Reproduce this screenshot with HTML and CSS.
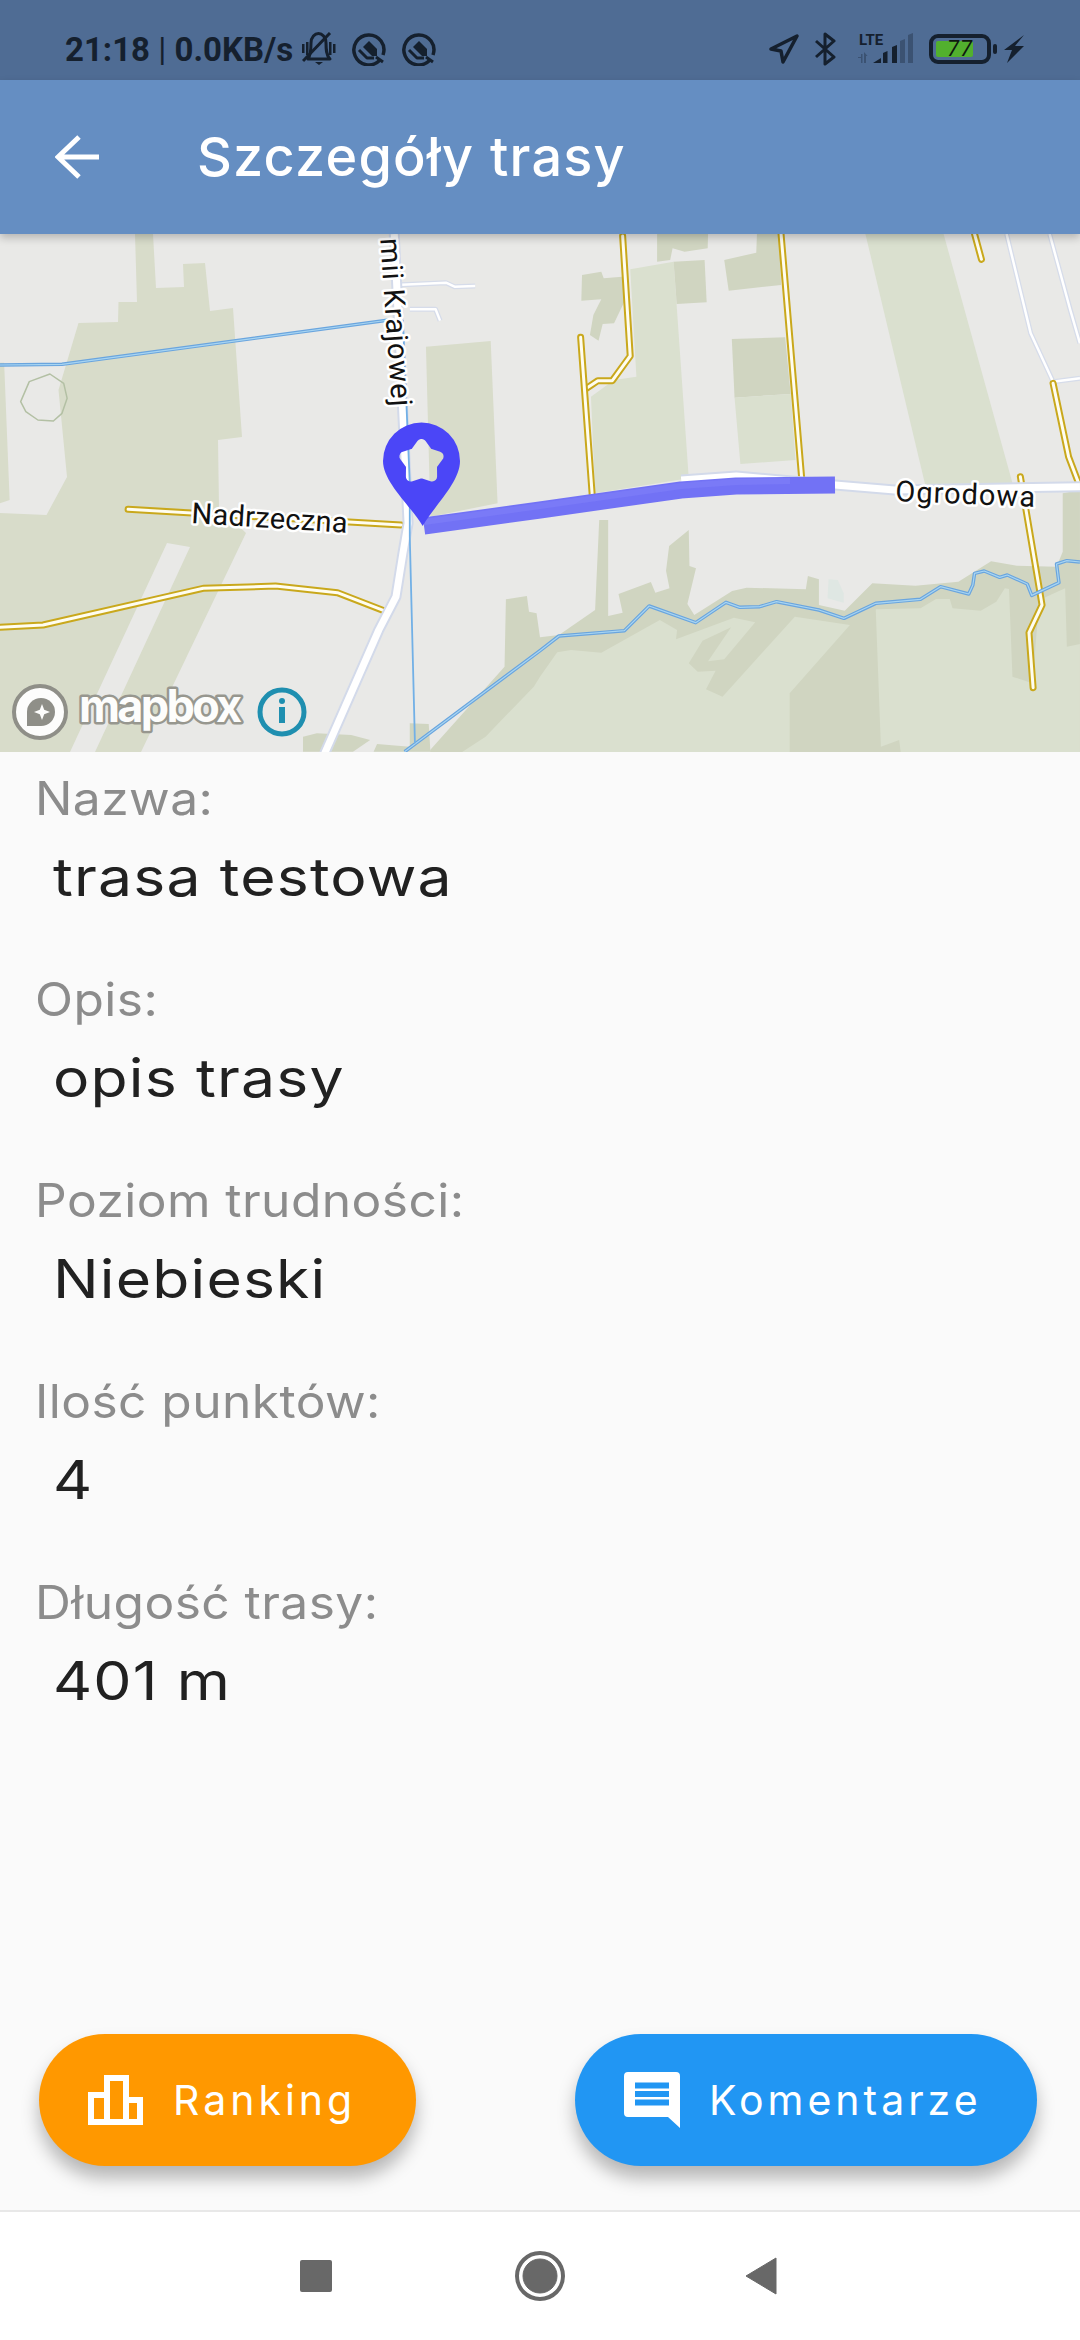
FILE: index.html
```html
<!DOCTYPE html>
<html lang="pl">
<head>
<meta charset="utf-8">
<title>Szczegóły trasy</title>
<link rel="stylesheet" href="styles.css">
</head>
<body>
<div class="screen">
  <header class="statusbar">
    <div class="status-left">
      <span class="status-text">21:18 <span class="thin">|</span> 0.0KB/s</span>
      <svg class="ic-bell" viewBox="0 0 34 34"><path class="si-line" d="M6 27c3-4 3-10 3-16 0-6 4-9.500 7.500-9.500S24 5 24 11c0 6 0 12 4 16z"/><path class="si-fill" d="M13 30h8l-4 3zM0 12h2.500v9H0zM4 10h2.500v13H4zM27 10h2.500v13H27zM31 12h2.500v9H31z"/><path class="si-slash" d="M1 29L28 1"/></svg>
      <svg class="ic-ring" viewBox="0 0 34 34"><path class="si-ring" d="M27.500 28.500A15 15 0 1 1 31 23"/><path class="si-fill" d="M11 15l6-6 8 8v7h-5z"/><path class="si-line" d="M7 18l8 8h7M24 25l7 5"/></svg>
      <svg class="ic-ring" viewBox="0 0 34 34"><path class="si-ring" d="M27.500 28.500A15 15 0 1 1 31 23"/><path class="si-fill" d="M11 15l6-6 8 8v7h-5z"/><path class="si-line" d="M7 18l8 8h7M24 25l7 5"/></svg>
    </div>
    <div class="status-right">
      <svg class="ic-nav" viewBox="0 0 30 30"><path class="si-nav" d="M2 15L28 2 14 28l-2-11z"/></svg>
      <svg class="ic-bt" viewBox="0 0 22 34"><path class="si-line" d="M2 9l18 16-9 7V2l9 7L2 25"/></svg>
      <svg class="ic-signal" viewBox="0 0 56 32">
        <text class="lte-text" x="1" y="12">LTE</text>
        <path class="si-faint" d="M0 24h3v-3h1.500v9H3v-5H0zM6 30V19l3.500 4H8v7z"/>
        <path class="si-fill" d="M15 30l8-5v5zM25 30V20l4.500-2v12zM34 30V14l5-2v18z"/>
        <path class="si-faint" d="M42 30V8l5-2v24zM50 30V2l5-2v30z"/>
      </svg>
      <div class="battery">
        <div class="battery-body"><div class="battery-fill"></div><span class="battery-num">77</span></div>
        <div class="battery-nub"></div>
      </div>
      <svg class="ic-bolt" viewBox="0 0 20 28"><path class="si-fill" d="M20 0L11 11h9L3 28l5-13H0z"/></svg>
    </div>
  </header>

  <div class="appbar">
    <svg class="ic-back" viewBox="0 0 44 44"><path class="back-line" d="M44 22H4M24 2L3 22l21 20"/></svg>
    <h1 class="title">Szczegóły trasy</h1>
  </div>

  <svg class="map" viewBox="0 234 1080 518">
    <rect class="land" x="0" y="234" width="1080" height="518"/>
    <polygon class="green" points="135,234 153,234 156,288 184,287 183,264 205,263 210,311 233,308 242,437 218,440 219,507 246,533 141,752 95,752 190,547 167,543 70,752 0,752 0,513 46.5,515 67,477 58.5,390 78.5,323 118,322 118.5,302 137,302"/>
    <g transform="translate(0 230) scale(.34435 .33333)">
      <polygon class="green" points="0,398 12,398 28,810 0,820"/>
      <polygon class="green" points="1237,350 1425,333 1445,820 1250,860"/>
      <polygon class="outline" points="145,432 185,460 195,505 180,550 155,573 110,570 75,545 60,515 85,455"/>
    </g>
    <g transform="translate(540 230) scale(.34435 .33333)">
      <polygon class="green-l" points="262,118 388,95 432,745 160,790 148,500 215,450 280,440"/>
      <polygon class="green-d" points="340,12 488,12 487,55 420,65 385,55 378,90 340,95"/>
      <polygon class="green-d" points="388,95 478,90 484,217 397,222"/>
      <polygon class="green-d" points="122,135 178,125 185,145 238,140 245,215 215,280 182,282 170,332 145,315 155,255 178,208 120,212"/>
      <polygon class="green-d" points="630,12 695,12 700,165 548,182 535,90 628,68"/>
      <polygon class="green-d" points="557,327 712,322 728,492 565,503"/>
      <polygon class="green-l" points="565,503 728,492 742,690 582,702"/>
      <polygon class="green-l" points="945,12 1172,12 1375,770 1120,770"/>
    </g>
    <g transform="translate(540 520) scale(.34435 .33333)">
      <polygon class="green-d" points="-99,238 -38,228 -32,275 -10,280 0,352 55,345 160,270 172,0 198,0 198,288 240,278 228,222 322,186 335,218 376,205 366,152 375,78 432,30 434,138 453,145 428,252 448,285 558,213 600,203 772,208 778,168 810,178 810,255 885,272 965,190 1090,197 1215,185 1310,124 1385,137 1500,140 1518,95 1518,-80 1568,-90 1568,700 -319,700 -319,690 -103,440"/>
      <polygon class="green-l" points="0,470 50,397 90,390 178,398 348,300 398,330 395,358 563,293 625,307 535,418 488,424 555,322 472,362 432,430 458,455 510,452 482,508 530,530 740,290 900,315 725,520 725,700 -232,700 -158,650 -18,500"/>
      <polygon class="green-l" points="975,268 1105,265 1150,237 1190,237 1198,265 1280,272 1325,245 1350,205 1362,207 1372,470 1430,490 1450,240 1525,205 1530,380 1568,372 1568,700 1048,700 1043,660 990,680"/>
      <polygon class="pond" points="838,178 865,180 882,220 882,248 835,235"/>
    </g>
    <g transform="translate(0 520) scale(.34435 .33333)">
      <polygon class="green-d" points="880,650 920,640 1020,645 1075,660 1025,695 880,695"/>
      <polygon class="green-d" points="1085,695 1095,672 1190,680 1190,610 1245,612 1250,695"/>
    </g>

    <g transform="translate(540 230) scale(.34435 .33333)">
      <polyline class="minor-c" points="1355,12 1425,310 1490,455 1568,445"/>
      <polyline class="minor" points="1355,12 1425,310 1490,455 1568,445"/>
      <polyline class="minor-c" points="1480,12 1540,240 1568,340"/>
      <polyline class="minor" points="1480,12 1540,240 1568,340"/>
      <polyline class="yel-c" points="240,18 262,378 210,452 168,452 135,475"/>
      <polyline class="yel" points="240,18 262,378 210,452 168,452 135,475"/>
      <polyline class="yel-c" points="118,322 152,800"/><polyline class="yel" points="118,322 152,800"/>
      <polyline class="yel-c" points="700,12 760,745"/><polyline class="yel" points="700,12 760,745"/>
      <polyline class="yel-c" points="1262,12 1282,88"/><polyline class="yel" points="1262,12 1282,88"/>
      <polyline class="yel-c" points="1490,460 1535,680 1568,770"/><polyline class="yel" points="1490,460 1535,680 1568,770"/>
    </g>
    <g transform="translate(540 520) scale(.34435 .33333)">
      <polyline class="yel-c" points="1395,-130 1458,255 1420,338 1432,503"/><polyline class="yel" points="1395,-130 1458,255 1420,338 1432,503"/>
      <polyline class="water-o" points="-393,695 0,392 55,348 245,332 317,258 452,308 540,247 580,262 638,260 687,245 810,270 883,295 975,250 1105,238 1163,200 1245,222 1257,195 1262,160 1290,153 1335,172 1357,165 1415,192 1428,226 1507,188 1500,132 1530,122 1568,126"/>
      <polyline class="water-i" points="-393,695 0,392 55,348 245,332 317,258 452,308 540,247 580,262 638,260 687,245 810,270 883,295 975,250 1105,238 1163,200 1245,222 1257,195 1262,160 1290,153 1335,172 1357,165 1415,192 1428,226 1507,188 1500,132 1530,122 1568,126"/>
    </g>
    <g transform="translate(0 520) scale(.34435 .33333)">
      <polyline class="yel-c" points="0,322 125,315 590,205 800,198 980,218 1115,272"/><polyline class="yel" points="0,322 125,315 590,205 800,198 980,218 1115,272"/>
    </g>
    <g transform="translate(0 230) scale(.34435 .33333)">
      <polyline class="yel-c" points="372,838 1165,885"/><polyline class="yel" points="372,838 1165,885"/>
      <polyline class="water-o" points="0,405 180,403 1130,270"/><polyline class="water-i" points="0,405 180,403 1130,270"/>
      <polyline class="minor-c" points="1150,165 1295,158 1320,170 1380,168"/><polyline class="minor" points="1150,165 1295,158 1320,170 1380,168"/>
      <polyline class="minor-c" points="1190,238 1265,238 1278,272"/><polyline class="minor" points="1190,238 1265,238 1278,272"/>
      <polyline class="main-c" points="1145,12 1185,880 1170,970 1150,1100 1100,1200 945,1565 900,1680"/>
      <polyline class="main" points="1145,12 1185,880 1170,970 1150,1100 1100,1200 945,1565 900,1680"/>
      <polyline class="water-thin" points="1170,270 1190,760 1190,920 1205,1540"/>
    </g>
    <g transform="translate(540 230) scale(.34435 .33333)">
      <polyline class="main-c" points="410,750 570,738 857,765 1030,780 1568,770"/>
      <polyline class="main" points="410,750 570,738 857,765 1030,780 1568,770"/>
    </g>
    <polyline class="route" points="424,526 540,510 681,490 736,486 835,485"/>
    <polyline class="route-h" points="424,522 540,506 681,486 736,482 790,481"/>

    <text class="road-label label-tight" transform="translate(191 523) rotate(3.600)">Nadrzeczna</text>
    <text class="road-label" transform="translate(895 501) rotate(2.400)">Ogrodowa</text>
    <text class="road-label" transform="translate(392 408) rotate(86)" text-anchor="end">mii Krajowej</text>

    <mask id="pin-hole" maskUnits="userSpaceOnUse" x="370" y="415" width="100" height="120">
      <path class="mask-w" d="M422.700 526C410 505 383 482 383 461a38.500 38.500 0 0 1 77 0c0 21-25 44-37.300 65z"/>
      <polygon class="mask-b" points="421.500,444 428,453 438.600,456.400 432,465.400 432.100,476.600 421.500,473 410.900,476.600 411,465.400 404.400,456.400 415,453"/>
    </mask>
    <rect class="pin" x="370" y="415" width="100" height="120" mask="url(#pin-hole)"/>

    <circle class="logo-ring" cx="40" cy="712" r="26"/>
    <path class="logo-drop" d="M27 726v-14a14 14 0 1 1 14 14z"/>
    <path class="logo-star" d="M42 704l2.200 5.800 5.800 2.200-5.800 2.200-2.200 5.800-2.200-5.800-5.800-2.200 5.800-2.200z"/>
    <text class="logo-text" x="79" y="722">mapbox</text>
    <circle class="info-ring" cx="282" cy="712" r="22"/>
    <circle class="info-dot" cx="282" cy="701" r="3"/>
    <rect class="info-dot" x="279" y="707" width="6" height="16"/>
  </svg>

  <main class="details">
    <section class="field"><p class="label">Nazwa:</p><p class="value">trasa testowa</p></section>
    <section class="field"><p class="label">Opis:</p><p class="value">opis trasy</p></section>
    <section class="field"><p class="label">Poziom trudności:</p><p class="value">Niebieski</p></section>
    <section class="field"><p class="label">Ilość punktów:</p><p class="value">4</p></section>
    <section class="field"><p class="label">Długość trasy:</p><p class="value">401 m</p></section>
  </main>

  <div class="actions">
    <button class="fab fab-orange">
      <svg class="ic-rank" viewBox="0 0 55 50"><rect class="rank-line" x="3" y="20" width="16" height="27"/><rect class="rank-line" x="19" y="3" width="19" height="44"/><rect class="rank-line" x="38" y="25" width="14" height="22"/></svg>
      <span>Ranking</span>
    </button>
    <button class="fab fab-blue">
      <svg class="ic-chat" viewBox="0 0 56 56"><path class="chat-bg" d="M4 0h48a4 4 0 0 1 4 4v52L44 45H4a4 4 0 0 1-4-4V4a4 4 0 0 1 4-4z"/><rect class="chat-bar" x="11" y="10.500" width="34" height="6"/><rect class="chat-bar" x="11" y="19" width="34" height="6"/><rect class="chat-bar" x="11" y="27.500" width="34" height="6"/></svg>
      <span>Komentarze</span>
    </button>
  </div>

  <nav class="navbar">
    <div class="nav-square"></div>
    <svg class="nav-home" viewBox="0 0 50 50"><circle class="home-ring" cx="25" cy="25" r="23"/><circle class="home-dot" cx="25" cy="25" r="17"/></svg>
    <svg class="nav-back" viewBox="0 0 32 38"><path class="home-dot" d="M31 1v36L1 19z"/></svg>
  </nav>
</div>
</body>
</html>
```
FILE: styles.css
```css
* { box-sizing: border-box; }
html, body { margin: 0; padding: 0; }
body { width: 1080px; height: 2340px; background: #fafafa; font-family: "Inter", "Liberation Sans", sans-serif; overflow: hidden; }
.screen { width: 1080px; height: 2340px; display: flex; flex-direction: column; }
p { margin: 0; }

.statusbar { height: 80px; background: #4f6c94; display: flex; align-items: center; justify-content: space-between; padding: 18px 56px 0 65px; color: #15202e; flex: none; }
.status-left, .status-right { display: flex; align-items: center; }
.status-text { font: 700 33px/1 "Roboto", sans-serif; white-space: nowrap; }
.thin { font-weight: 400; }
.ic-bell { width: 34px; height: 34px; margin-left: 9px; }
.ic-ring { width: 34px; height: 34px; margin-left: 16px; }
.si-line { fill: none; stroke: #15202e; stroke-width: 3; stroke-linejoin: round; }
.si-slash { fill: none; stroke: #15202e; stroke-width: 3; }
.si-ring { fill: none; stroke: #15202e; stroke-width: 3.500; }
.si-fill { fill: #15202e; }
.si-faint { fill: #3b5272; }
.si-nav { fill: none; stroke: #15202e; stroke-width: 3.500; stroke-linejoin: round; }
.ic-nav { width: 30px; height: 30px; }
.ic-bt { width: 22px; height: 34px; margin-left: 15px; }
.ic-signal { width: 56px; height: 32px; margin-left: 22px; overflow: visible; }
.lte-text { font: 700 15px "Roboto", sans-serif; fill: #15202e; }
.battery { display: flex; align-items: center; margin-left: 15px; }
.battery-body { position: relative; width: 62px; height: 30px; border: 4px solid #15202e; border-radius: 9px; padding: 3px; }
.battery-fill { width: 37px; height: 16px; background: #52b02e; border-radius: 2px; }
.battery-num { position: absolute; left: 14px; top: 0; font: italic 400 22px/22px "Roboto", sans-serif; color: #0e1a10; letter-spacing: 1px; }
.battery-nub { width: 4px; height: 10px; margin-left: 2px; background: #15202e; border-radius: 2px; }
.ic-bolt { width: 20px; height: 28px; margin-left: 7px; }

.appbar { height: 154px; background: #658ec2; display: flex; align-items: center; padding-left: 55px; box-shadow: 0 4px 8px rgba(0,0,0,.22); position: relative; z-index: 2; flex: none; }
.ic-back { width: 44px; height: 44px; margin-right: 98px; }
.back-line { fill: none; stroke: #fff; stroke-width: 5; }
.title { margin: 0; font-size: 54px; font-weight: 500; color: #fff; letter-spacing: 1.2px; line-height: 1; white-space: nowrap; }

.map { display: block; width: 1080px; height: 518px; flex: none; }
.map polyline, .map polygon.outline { fill: none; vector-effect: non-scaling-stroke; stroke-linejoin: round; }
.land { fill: #e9e9e7; }
.green { fill: #d8dcca; }
.green-l { fill: #dae0cf; }
.green-d { fill: #d0d5c1; }
.pond { fill: #dfe7e3; }
.outline { stroke: #b3c0a4; stroke-width: 1.500; }
.minor-c { stroke: #d6dcea; stroke-width: 5; }
.minor { stroke: #fff; stroke-width: 2.500; }
.main-c { stroke: #d3daea; stroke-width: 11; }
.main { stroke: #fff; stroke-width: 7; }
.yel-c { stroke: #c9a81c; stroke-width: 7; stroke-linecap: round; }
.yel { stroke: #fffdf0; stroke-width: 3; stroke-linecap: round; }
.water-o { stroke: #6aa5de; stroke-width: 3.500; }
.water-i { stroke: #a8d5f2; stroke-width: 1.200; }
.water-thin { stroke: #72b0e6; stroke-width: 1.800; }
.route { stroke: #7272f5; stroke-width: 17; }
.route-h { stroke: #7a7af7; stroke-width: 6; }
.mask-w { fill: #fff; }
.mask-b { fill: #000; stroke: #000; stroke-width: 10; stroke-linejoin: round; }
.pin { fill: #4b46f7; }
.road-label { font: 400 29px "Roboto", sans-serif; fill: #111; stroke: #fff; stroke-width: 5; paint-order: stroke; stroke-linejoin: round; letter-spacing: 1px; }
.label-tight { letter-spacing: 0.3px; }
.logo-ring { fill: #fdfdfc; stroke: #8f8f88; stroke-width: 4; }
.logo-drop { fill: #8f8f88; }
.logo-star { fill: #fdfdfc; }
.logo-text { font: 700 45px "Inter", sans-serif; fill: #fdfdfc; stroke: #97978f; stroke-width: 5; paint-order: stroke; stroke-linejoin: round; letter-spacing: -2.700px; }
.info-ring { fill: none; stroke: #1f8fb0; stroke-width: 5; }
.info-dot { fill: #1f8fb0; }

.details { flex: 1; padding: 16px 0 0 35px; display: flex; flex-direction: column; }
.field { height: 201px; flex: none; }
.label { font-size: 46px; line-height: 60px; letter-spacing: 0.4px; color: #8c8c8c; transform: scaleX(1.08); transform-origin: left center; }
.value { margin: 18px 0 0 18px; font-size: 53px; line-height: 62px; letter-spacing: 1px; color: #212121; transform: scaleX(1.145); transform-origin: left center; }

.actions { display: flex; justify-content: space-between; padding: 0 43px 44px 39px; flex: none; }
.fab { height: 132px; border: 0; border-radius: 66px; display: flex; align-items: center; font-family: inherit; font-size: 41px; color: #fff; letter-spacing: 4px; box-shadow: 0 12px 18px rgba(0,0,0,.28); padding: 0; }
.fab-orange { width: 377px; background: #ff9800; padding-left: 49px; gap: 30px; }
.fab-blue { width: 462px; background: #2196f3; padding-left: 49px; gap: 29px; }
.ic-rank { width: 55px; height: 50px; }
.rank-line { fill: none; stroke: #fff; stroke-width: 6; }
.ic-chat { width: 56px; height: 56px; }
.chat-bg { fill: #fff; }
.chat-bar { fill: #2196f3; }

.navbar { height: 130px; background: #fff; border-top: 2px solid #e8e8e8; display: flex; align-items: center; flex: none; padding-left: 300px; }
.nav-square { width: 32px; height: 32px; background: #686868; border-radius: 2px; }
.nav-home { width: 50px; height: 50px; margin-left: 183px; }
.home-ring { fill: none; stroke: #686868; stroke-width: 4; }
.home-dot { fill: #686868; stroke: #686868; stroke-linejoin: round; stroke-width: 1; }
.nav-back { width: 32px; height: 38px; margin-left: 180px; }
```
